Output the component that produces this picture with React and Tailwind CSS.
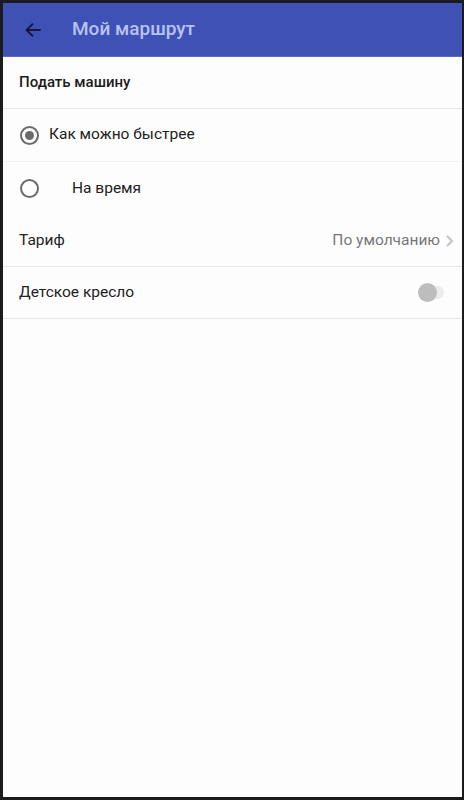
import React, { useState } from "react";

function Radio({ checked }) {
  return (
    <span className="flex h-[19px] w-[19px] items-center justify-center rounded-full border-2 border-[#6b6b6b]">
      {checked && <span className="h-[9px] w-[9px] rounded-full bg-[#6b6b6b]" />}
    </span>
  );
}

export default function App() {
  const [mode, setMode] = useState("asap");
  const [seat, setSeat] = useState(false);

  return (
    <div
      className="h-[800px] w-[464px] bg-[#1b1b1d] pb-[3px] pl-[3px] pr-[2px] pt-[3px]"
      style={{ fontFamily: "Roboto, 'Noto Sans', sans-serif" }}
    >
      <div className="flex h-full flex-col bg-[#fefdfe]">
        <header className="flex h-[54px] shrink-0 items-center bg-[#3f51b5] border-b border-[#5a6bc4]">
          <button className="ml-[18px] flex h-6 w-6 items-center justify-center text-[#10143a]">
            <svg width="18" height="18" viewBox="0 0 24 24" fill="none" stroke="currentColor" strokeWidth="2.4" strokeLinecap="square">
              <path d="M21 12H4" />
              <path d="M11 4.5 3.5 12l7.5 7.5" />
            </svg>
          </button>
          <h1 className="ml-[27px] text-[19px] font-medium text-[#b8c3f2]">Мой маршрут</h1>
        </header>

        <div className="flex h-[52px] shrink-0 items-center border-b border-[#e6e6e6] pl-[16px] text-[15px] font-medium text-[#1c1c1c]">
          Подать машину
        </div>

        <button
          onClick={() => setMode("asap")}
          className="flex h-[53px] shrink-0 items-center border-b border-[#f3f3f3] pl-[17px] text-left text-[15.5px] text-[#222]"
        >
          <Radio checked={mode === "asap"} />
          <span className="ml-[10px]">Как можно быстрее</span>
        </button>

        <button
          onClick={() => setMode("time")}
          className="flex h-[53px] shrink-0 items-center pl-[17px] text-left text-[15.5px] text-[#222]"
        >
          <Radio checked={mode === "time"} />
          <span className="ml-[33px]">На время</span>
        </button>

        <div className="flex h-[52px] shrink-0 items-center justify-between border-b border-[#e6e6e6] pl-[16px] pr-[6px] text-[15.5px]">
          <span className="text-[#222]">Тариф</span>
          <span className="flex items-center gap-[4px] text-[#777]">
            По умолчанию
            <svg width="12" height="14" viewBox="0 0 12 14" fill="none" stroke="#c4c4c4" strokeWidth="2">
              <path d="M3 2l5 5-5 5" />
            </svg>
          </span>
        </div>

        <div className="flex h-[52px] shrink-0 items-center justify-between border-b border-[#e6e6e6] pl-[16px] pr-[18px] text-[15.5px]">
          <span className="text-[#222]">Детское кресло</span>
          <button onClick={() => setSeat(!seat)} className="relative flex h-[20px] w-[26px] items-center">
            <span className="absolute left-[6px] h-[13px] w-[20px] rounded-full bg-[#ececec]" />
            <span className="absolute left-[0px] h-[19px] w-[19px] rounded-full bg-[#bdbdbd]" />
          </button>
        </div>

        <div className="flex-1" />
      </div>
    </div>
  );
}
